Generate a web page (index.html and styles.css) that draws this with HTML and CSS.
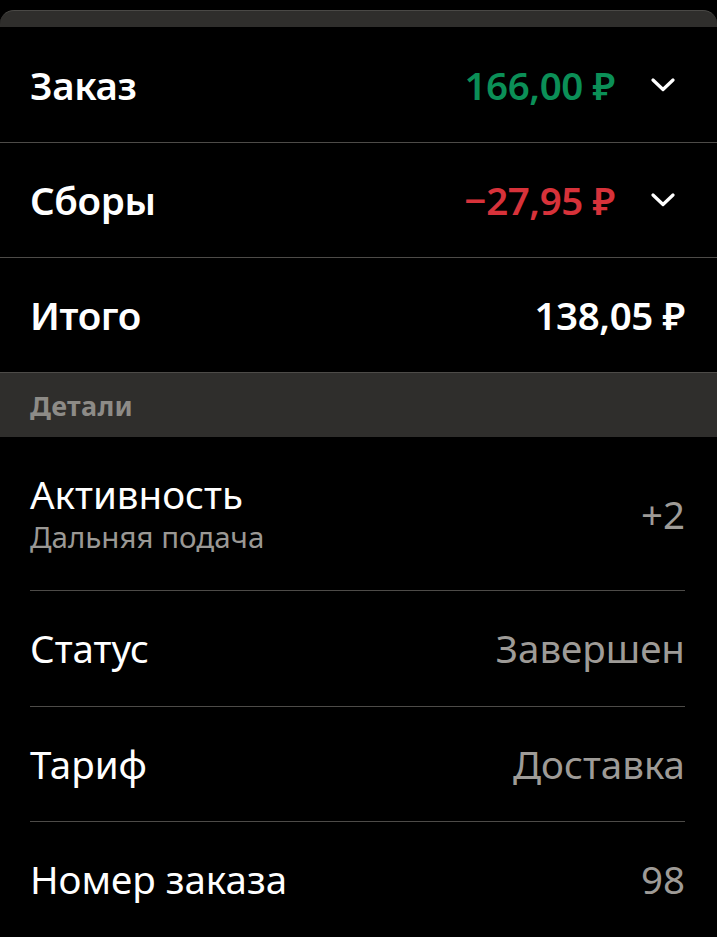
FILE: index.html
```html
<!DOCTYPE html>
<html lang="ru">
<head>
<meta charset="utf-8">
<link rel="stylesheet" href="styles.css">
</head>
<body>
<div class="sheet-top"></div>
<div class="summary">
  <div class="srow">
    <span class="slabel">Заказ</span>
    <span class="sright"><span class="sval green">166,00 ₽</span>
      <svg class="chev" width="24" height="14" viewBox="0 0 24 14"><path d="M2 2 L12 11.5 L22 2" fill="none" stroke="#fff" stroke-width="3.2" stroke-linecap="round" stroke-linejoin="round"/></svg></span>
  </div>
  <div class="srow">
    <span class="slabel">Сборы</span>
    <span class="sright"><span class="sval red">−27,95 ₽</span>
      <svg class="chev" width="24" height="14" viewBox="0 0 24 14"><path d="M2 2 L12 11.5 L22 2" fill="none" stroke="#fff" stroke-width="3.2" stroke-linecap="round" stroke-linejoin="round"/></svg></span>
  </div>
  <div class="srow total">
    <span class="slabel">Итого</span>
    <span class="sval white">138,05 ₽</span>
  </div>
</div>
<div class="section-head">Детали</div>
<div class="details">
  <div class="drow tall">
    <div class="dtext">
      <div class="dlabel">Активность</div>
      <div class="dsub">Дальняя подача</div>
    </div>
    <span class="dval">+2</span>
  </div>
  <div class="drow">
    <div class="dlabel">Статус</div>
    <span class="dval">Завершен</span>
  </div>
  <div class="drow">
    <div class="dlabel">Тариф</div>
    <span class="dval">Доставка</span>
  </div>
  <div class="drow">
    <div class="dlabel">Номер заказа</div>
    <span class="dval">98</span>
  </div>
</div>
</body>
</html>
```

FILE: styles.css
```css
html, body {
  margin: 0;
  padding: 0;
  background: #000;
}
body {
  font-family: "Noto Sans", "Open Sans", sans-serif;
  color: #fff;
  padding-top: 10px;
  width: 717px;
  overflow: hidden;
}
.sheet-top {
  height: 16px;
  background: #2f2e2c;
  border-top: 1px solid #4a4946;
  border-radius: 14px 14px 0 0;
}
.srow {
  height: 114px;
  border-bottom: 1px solid #4d4b48;
  display: flex;
  align-items: center;
  justify-content: space-between;
  padding: 0 32px 0 30px;
}
.srow:first-child {
  height: 115px;
}
.slabel {
  font-size: 38.5px;
  font-weight: 600;
  letter-spacing: -0.4px;
}
.sright {
  display: flex;
  align-items: center;
  gap: 36px;
}
.sval {
  font-size: 38.5px;
  font-weight: 600;
  letter-spacing: -0.4px;
}
.green { color: #0b8f57; }
.red { color: #d7323a; }
.white { color: #fff; }
.chev {
  display: block;
  margin-right: 10px;
}
.section-head {
  height: 64px;
  background: #2f2e2c;
  color: #8d8b87;
  font-size: 27px;
  font-weight: 700;
  letter-spacing: 0.3px;
  display: flex;
  align-items: center;
  padding-left: 30px;
}
.details {
  padding: 0 32px 0 30px;
}
.drow {
  height: 114.6px;
  border-bottom: 1px solid #4d4b48;
  display: flex;
  align-items: center;
  justify-content: space-between;
}
.drow.tall {
  height: 153px;
}
.dlabel {
  font-size: 38.5px;
  font-weight: 400;
  line-height: 1.25;
}
.dsub {
  font-size: 29.5px;
  color: #9a9894;
  line-height: 1.3;
}
.dval {
  font-size: 38.5px;
  color: #9e9b97;
}
```
